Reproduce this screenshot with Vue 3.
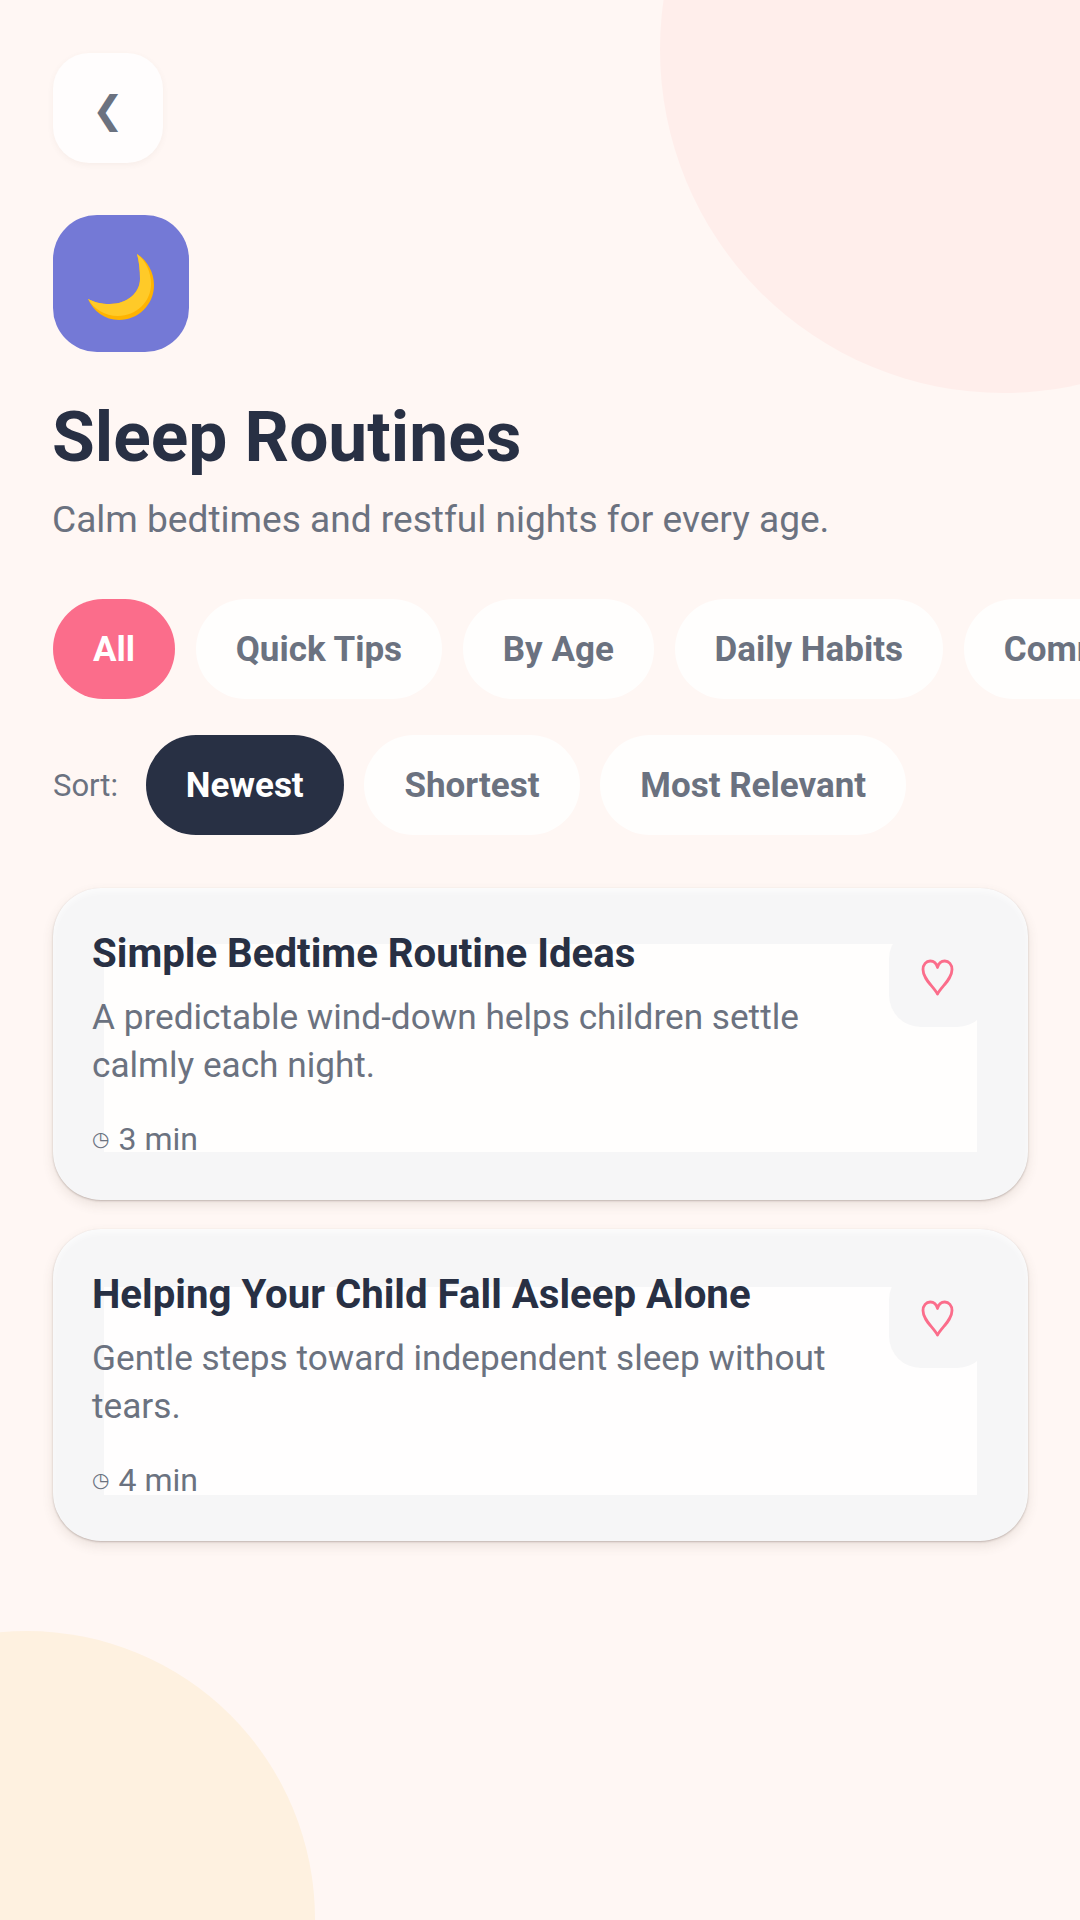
<script setup>
import { ref } from 'vue'

const categories = ['All', 'Quick Tips', 'By Age', 'Daily Habits', 'Common Issues']
const sorts = ['Newest', 'Shortest', 'Most Relevant']
const activeCategory = ref('All')
const activeSort = ref('Newest')

const articles = [
  {
    title: 'Simple Bedtime Routine Ideas',
    text: 'A predictable wind-down helps children settle calmly each night.',
    time: '3 min'
  },
  {
    title: 'Helping Your Child Fall Asleep Alone',
    text: 'Gentle steps toward independent sleep without tears.',
    time: '4 min'
  }
]
</script>

<template>
  <div class="page">
    <div class="blob blob--top"></div>
    <div class="blob blob--bottom"></div>

    <main class="content">
      <button class="back" type="button">❮</button>

      <div class="topic-icon">
        <svg class="moon" width="66" height="67" viewBox="0 0 66 67">
          <path d="M49 1C60 8 66 20 66 32C66 52 50 67 31 67C17 67 5 58 0 46C6 49 13 51 22 51C39 51 52 40 52 26C52 17 51 8 49 1Z" fill="#ffb300" />
          <path d="M49 1C58 8 63 19 63 31C63 49 48 63 30 63C17 63 6 56 0 46C6 49 13 51 22 51C39 51 52 40 52 26C52 17 51 8 49 1Z" fill="#ffca28" />
        </svg>
      </div>

      <h1 class="title">Sleep Routines</h1>
      <p class="subtitle">Calm bedtimes and restful nights for every age.</p>

      <div class="chips">
        <button
          v-for="cat in categories"
          :key="cat"
          type="button"
          class="chip"
          :class="{ 'chip--pink': cat === activeCategory }"
          @click="activeCategory = cat"
        >
          {{ cat }}
        </button>
      </div>

      <div class="sort-row">
        <span class="sort-label">Sort:</span>
        <button
          v-for="sort in sorts"
          :key="sort"
          type="button"
          class="chip"
          :class="{ 'chip--dark': sort === activeSort }"
          @click="activeSort = sort"
        >
          {{ sort }}
        </button>
      </div>

      <div class="cards">
        <article v-for="item in articles" :key="item.title" class="card">
          <div class="card__body">
            <h2 class="card__title">{{ item.title }}</h2>
            <p class="card__text">{{ item.text }}</p>
            <div class="card__time"><span class="clock">◷</span>{{ item.time }}</div>
          </div>
          <button class="fav" type="button">
            <svg width="33" height="37" viewBox="0 0 33 37">
              <path d="M16.500 35C12 27 2 20 2 10.500C2 5.500 5.200 2 9.200 2C12.700 2 15.500 4.500 16.500 8.500C17.500 4.500 20.300 2 23.800 2C27.800 2 31 5.500 31 10.500C31 20 21 27 16.500 35Z" fill="none" stroke="#fb6d8b" stroke-width="2.800" stroke-linejoin="round" />
            </svg>
          </button>
        </article>
      </div>
    </main>
  </div>
</template>

<style>
body {
  margin: 0;
}
</style>

<style scoped>
.page {
  position: relative;
  width: 1080px;
  height: 1920px;
  overflow: hidden;
  background: #fff7f4;
  font-family: Roboto, "Liberation Sans", sans-serif;
}

.blob {
  position: absolute;
  border-radius: 50%;
}

.blob--top {
  top: -294px;
  left: 660px;
  width: 687px;
  height: 687px;
  background: #ffeeeb;
}

.blob--bottom {
  top: 1631px;
  left: -261px;
  width: 576px;
  height: 576px;
  background: #fef1e0;
}

.content {
  position: relative;
  padding: 53px 0 0 53px;
}

.back {
  display: flex;
  align-items: center;
  justify-content: center;
  width: 110px;
  height: 110px;
  padding: 4px 0 0;
  border: 0;
  border-radius: 36px;
  background: #fffdfd;
  box-shadow: 0 2px 6px rgba(120, 80, 70, 0.06);
  color: #6b7280;
  font-family: "DejaVu Sans", sans-serif;
  font-size: 38px;
}

.topic-icon {
  display: flex;
  align-items: center;
  justify-content: center;
  width: 136px;
  height: 137px;
  margin-top: 52px;
  border-radius: 44px;
  background: #7479d6;
}

.moon {
  margin-top: 5px;
}

.title {
  margin: 46px 0 0 -1px;
  color: #283044;
  font-size: 69.500px;
  font-weight: 700;
  line-height: 80px;
}

.subtitle {
  margin: 15px 0 0 -1px;
  color: #6b7280;
  font-size: 37.100px;
  line-height: 54px;
}

.chips {
  display: flex;
  gap: 20.700px;
  margin-top: 52px;
}

.chip {
  flex: none;
  height: 100px;
  padding: 0 40px;
  border: 0;
  border-radius: 50px;
  background: #fffefd;
  color: #6b7280;
  font-family: inherit;
  font-size: 35px;
  font-weight: 700;
}

.chip--pink {
  background: #fb6d8b;
  color: #fff;
}

.chip--dark {
  background: #283044;
  color: #fff;
}

.sort-row {
  display: flex;
  align-items: center;
  gap: 20.700px;
  margin-top: 36px;
}

.sort-label {
  margin-right: 7px;
  color: #6b7280;
  font-size: 31px;
}

.cards {
  display: flex;
  flex-direction: column;
  gap: 29px;
  width: 975px;
  margin-top: 53px;
}

.card {
  display: flex;
  align-items: flex-start;
  justify-content: space-between;
  box-sizing: border-box;
  height: 312px;
  padding: 39px 39px 0;
  border-radius: 48px;
  background:
    linear-gradient(#fffefd, #fffefd) 51px 56px / calc(100% - 102px) calc(100% - 104px) no-repeat,
    #f6f6f7;
  box-shadow:
    0 1px 2px rgba(90, 70, 60, 0.3),
    0 5px 12px rgba(90, 70, 60, 0.12),
    inset 0 4px 6px rgba(255, 255, 255, 0.6);
}

.card:nth-child(2) {
  background:
    linear-gradient(#fffefe, #fffefe) 51px 58px / calc(100% - 102px) calc(100% - 104px) no-repeat,
    #f6f6f7;
}

.card__body {
  width: 760px;
  padding-top: 4px;
}

.card__title {
  margin: 0;
  color: #283044;
  font-size: 40.200px;
  font-weight: 700;
  line-height: 46px;
}

.card__text {
  margin: 16px 0 0;
  color: #6b7280;
  font-size: 35.200px;
  line-height: 48px;
}

.card__time {
  display: flex;
  align-items: center;
  margin-top: 26px;
  color: #6b7280;
  font-size: 32px;
  line-height: 48px;
}

.clock {
  margin-right: 9px;
  font-family: "DejaVu Sans", sans-serif;
  font-size: 20px;
}

.fav {
  display: flex;
  align-items: center;
  justify-content: center;
  flex: none;
  width: 100px;
  height: 100px;
  padding: 0 3px 0 0;
  border: 0;
  border-radius: 32px;
  background: #f6f6f7;
}
</style>
